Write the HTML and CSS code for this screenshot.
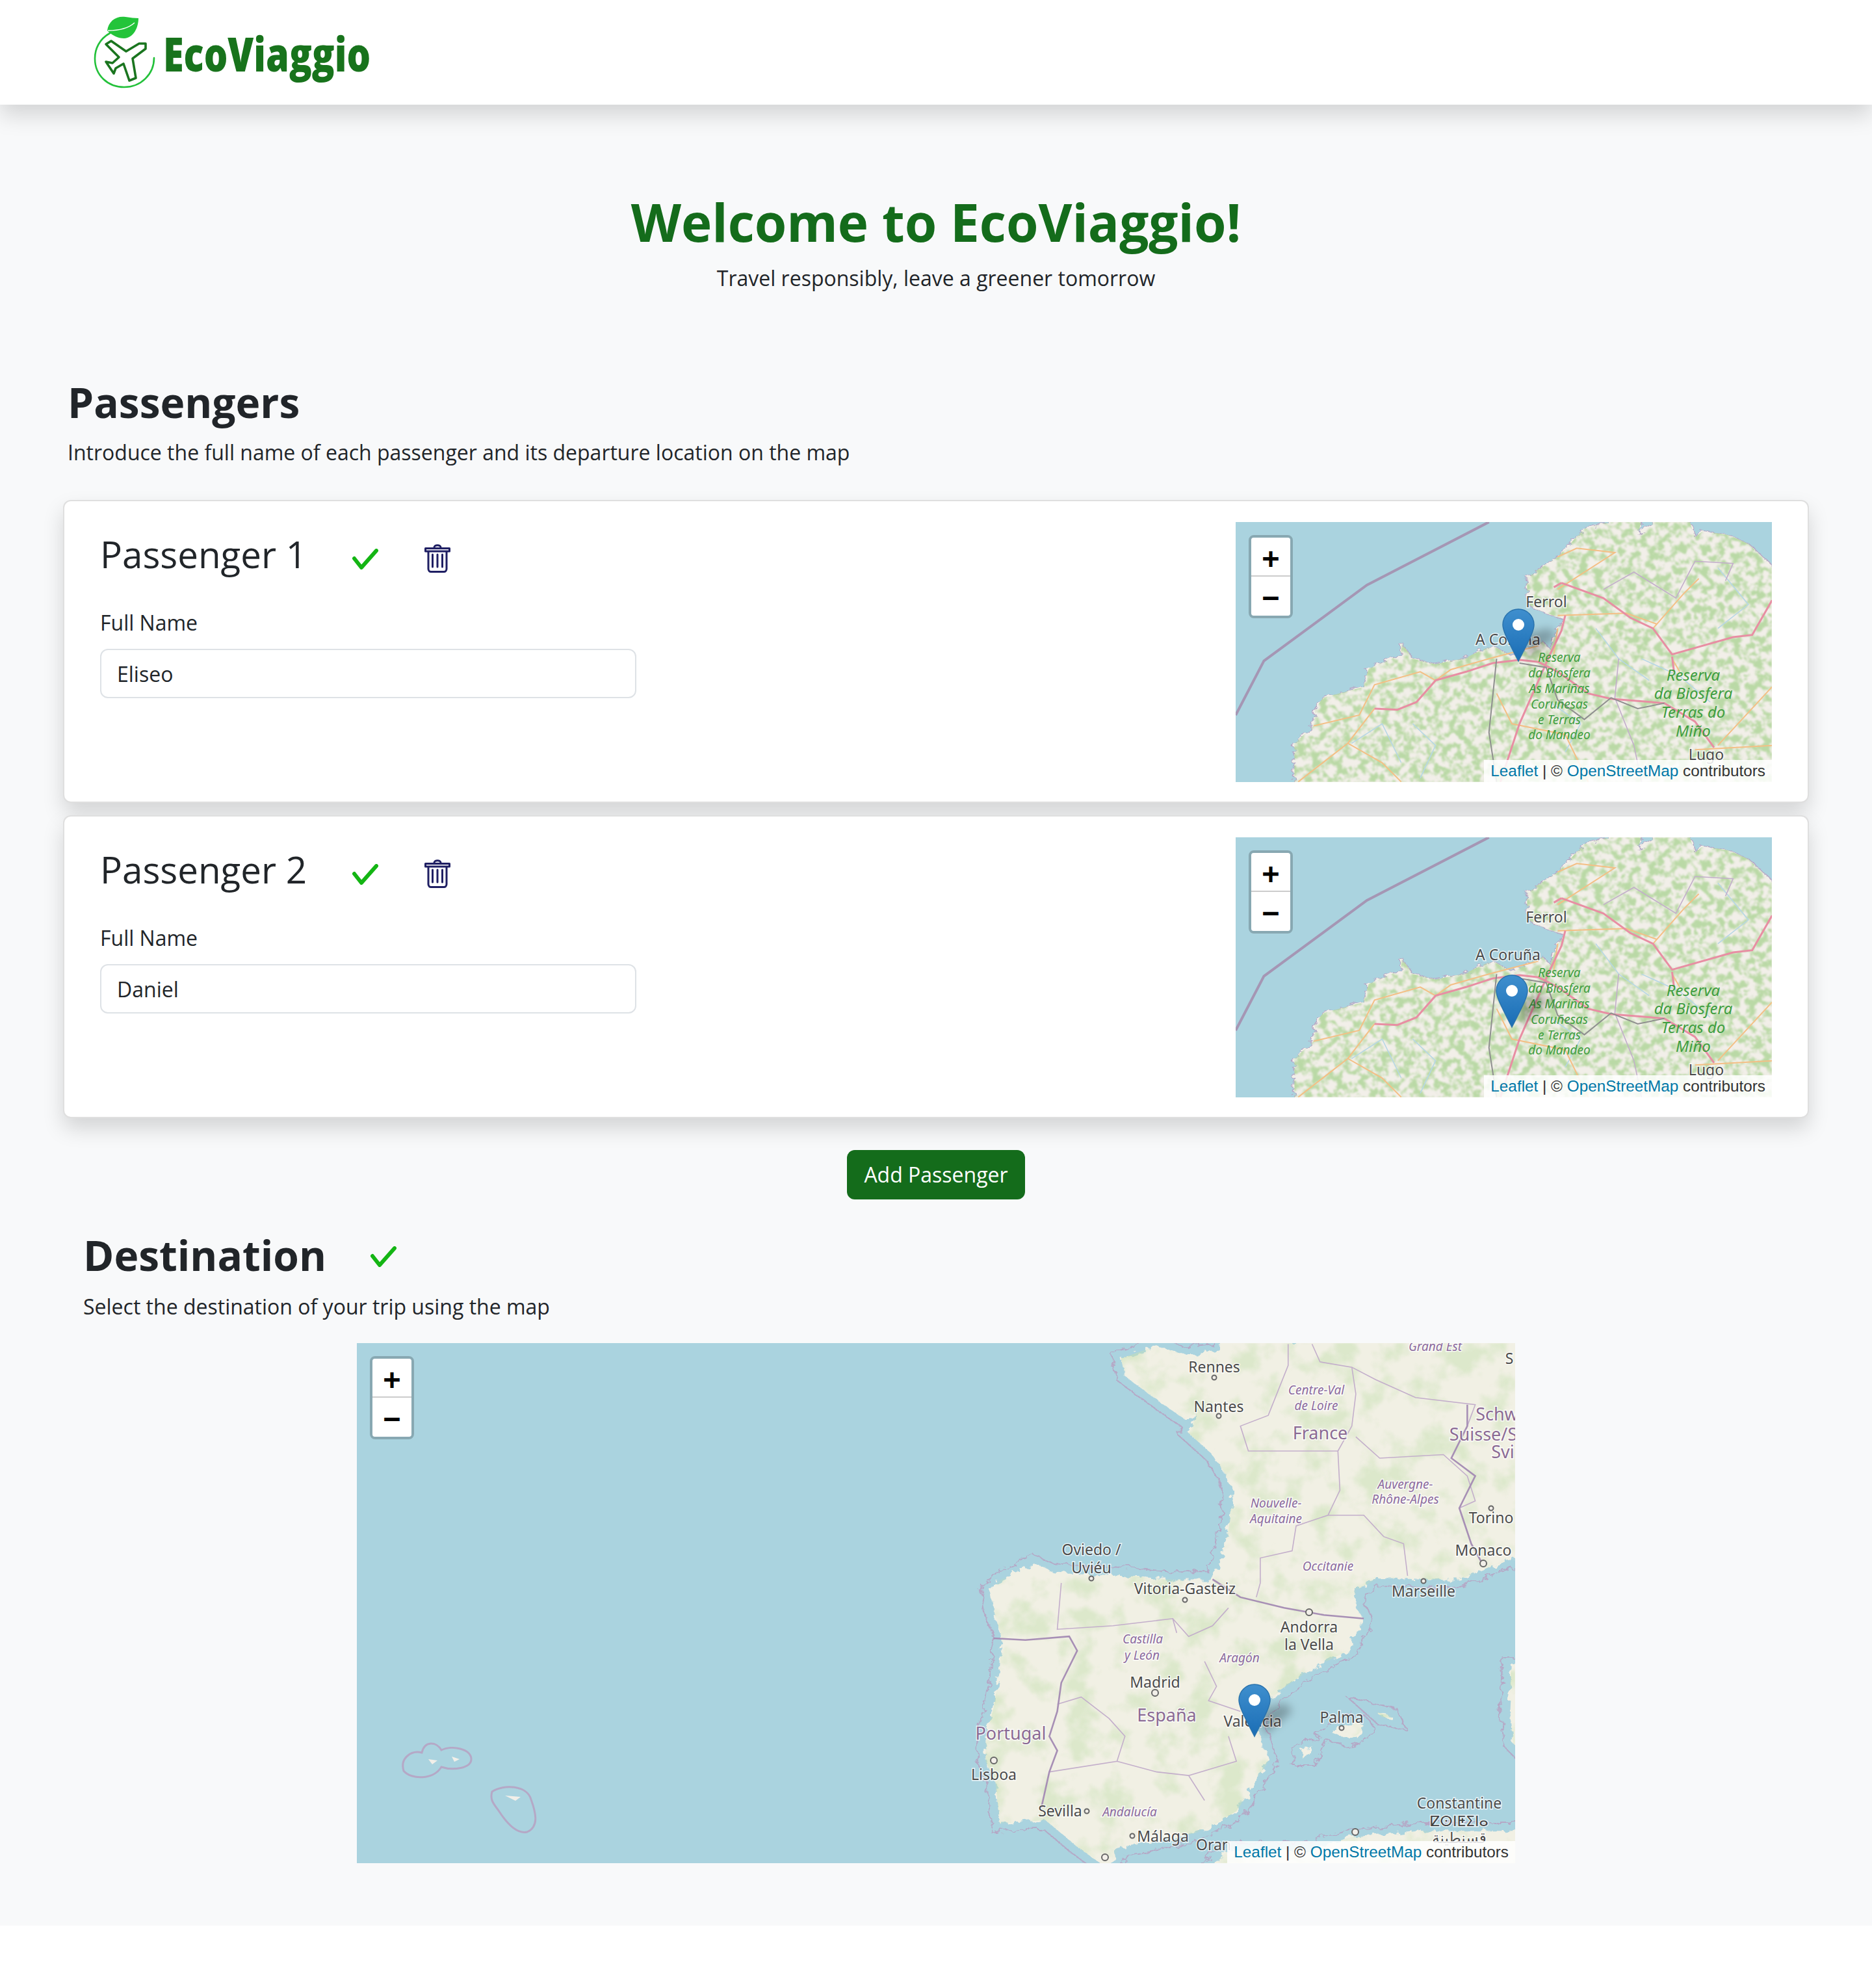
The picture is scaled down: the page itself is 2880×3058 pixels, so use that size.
FILE: index.html
```html
<!DOCTYPE html>
<html lang="en">
<head>
<meta charset="utf-8">
<title>EcoViaggio</title>
<link rel="stylesheet" href="styles.css">
</head>
<body>
<svg class="defs" width="0" height="0" aria-hidden="true">
  <defs>
    <filter id="mottle" x="0" y="0" width="100%" height="100%" color-interpolation-filters="sRGB">
      <feTurbulence type="fractalNoise" baseFrequency=".085" numOctaves="4" seed="7"/>
      <feColorMatrix values="0 0 0 0 .73  0 0 0 0 .85  0 0 0 0 .65  5 0 0 0 -2.1"/>
      <feGaussianBlur stdDeviation=".8"/>
    </filter>
    <filter id="mottle-soft" x="0" y="0" width="100%" height="100%" color-interpolation-filters="sRGB">
      <feTurbulence type="fractalNoise" baseFrequency=".022" numOctaves="5" seed="11"/>
      <feColorMatrix values="0 0 0 0 .78  0 0 0 0 .88  0 0 0 0 .70  4 0 0 0 -1.9"/>
      <feGaussianBlur stdDeviation="1.200"/>
    </filter>
    <filter id="rough" x="-5%" y="-5%" width="110%" height="110%">
      <feTurbulence type="fractalNoise" baseFrequency=".045" numOctaves="4" seed="3" result="n"/>
      <feDisplacementMap in="SourceGraphic" in2="n" scale="26"/>
    </filter>
    <filter id="soft-shadow" x="-50%" y="-50%" width="200%" height="200%">
      <feGaussianBlur stdDeviation="7"/>
    </filter>
    <linearGradient id="pin" x1="0" y1="0" x2="0" y2="1">
      <stop offset="0" stop-color="#3f8fce"/>
      <stop offset="1" stop-color="#1a6db5"/>
    </linearGradient>

    <path id="galicia-land" d="M190 1300L190 1090L240 1010L245 930L265 880L370 830L385 745L470 680L470 625L500 700L560 725L640 695L680 660L710 640L760 690L840 620L860 660L880 560L900 520L820 470L800 440L800 320L880 230L950 100L1030 60L1100 60L1090 130L1130 60L1225 60L1240 140L1260 110L1330 130L1380 170L1460 300L1460 1300Z"/>
    <clipPath id="galicia-clip"><use href="#galicia-land" transform="translate(-21.1,-23) scale(.5869,.3333)"/></clipPath>

    <symbol id="galicia-map" viewBox="0 0 825 400">
      <rect class="sea" width="825" height="400"/>
      <g transform="translate(-21.1,-23) scale(.5869,.3333)">
        <path class="m-bound" d="M700 69L380 360L110 710L36 960"/>
      </g>
      <use href="#galicia-land" class="land-halo" transform="translate(-21.1,-23) scale(.5869,.3333)"/>
      <use href="#galicia-land" class="land" transform="translate(-21.1,-23) scale(.5869,.3333)"/>
      <rect class="mottle" width="825" height="400" clip-path="url(#galicia-clip)"/>
      <g transform="translate(-21.1,-23) scale(.5869,.3333)">
        <path class="river" d="M1100 700L1200 780L1280 900M500 1000L560 1100L520 1250M980 560L1040 700L1120 800M1300 280L1380 450L1300 560M860 900L940 1000L900 1130M340 1090L420 1000L470 1180"/>
        <path class="border" d="M1000 380L1080 300L1190 420L1240 250L1340 260L1320 340M1040 700L1030 880L1080 1100L1100 1268"/>
        <path class="minor" d="M240 1010L360 960L400 820L520 760L560 800M400 930L330 1090L420 1180L470 1268M880 230L930 190L1030 210L880 380M880 500L1060 490L1140 540M1240 1120L1442 1100M720 860L760 1000L900 1050L960 1268M1180 700L1200 760M1442 830L1300 1100M830 640L700 700L600 750L560 800M880 560L870 680M1130 560L1210 400L1250 330M330 1090L200 1268"/>
        <path class="road" d="M400 930L460 935L510 900L560 800L640 760L710 720L780 705L830 715L880 760L960 860L1020 885L1160 905L1240 990L1290 1110M890 350L1000 420L1070 510L1130 560L1180 680L1340 600L1390 590L1442 430M870 370L890 350M900 500L890 570L860 680L830 800L780 1000L730 1268M1180 690L1185 760"/>
        <path class="rail" d="M720 700L700 1040L720 1268M780 720L850 740L880 890L950 980L1020 880L1090 930L1160 905"/>
      </g>
      <text class="ml" x="478" y="131">Ferrol</text>
      <text class="ml" x="419" y="189">A Coruña</text>
      <text class="ml" x="724" y="366">Lugo</text>
      <text class="ml-green" x="498" y="215">Reserva</text>
      <text class="ml-green" x="498" y="239">da Biosfera</text>
      <text class="ml-green" x="498" y="263">As Mariñas</text>
      <text class="ml-green" x="498" y="287">Coruñesas</text>
      <text class="ml-green" x="498" y="311">e Terras</text>
      <text class="ml-green" x="498" y="334">do Mandeo</text>
      <text class="ml-green big" x="704" y="244">Reserva</text>
      <text class="ml-green big" x="704" y="272">da Biosfera</text>
      <text class="ml-green big" x="704" y="301">Terras do</text>
      <text class="ml-green big" x="704" y="330">Miño</text>
    </symbol>

    <symbol id="pin-icon" viewBox="0 0 100 84">
      <path class="pin-shadow" d="M34 40L72 30L84 42L40 80Z"/>
      <path class="pin-body" d="M25 1C11.700 1 1 11.700 1 25C1 33 5 42 25 81C45 42 49 33 49 25C49 11.700 38.300 1 25 1Z"/>
      <circle class="pin-dot" cx="25" cy="25" r="9"/>
    </symbol>

    <path id="dest-land" d="M530 70L620 35L690 60L780 50L780 20L1540 20L1540 620L1440 665L1380 690L1280 690L1180 685L1120 720L1120 770L1140 800L1100 890L1010 940L930 1000L880 1060L870 1110L880 1130L900 1200L850 1290L820 1340L760 1380L720 1400L600 1430L530 1440L500 1500L470 1480L420 1440L340 1365L225 1375L215 1260L190 1200L190 1130L210 1050L225 950L230 850L210 780L200 720L230 690L310 645L360 670L560 680L640 690L760 690L780 640L800 550L810 440L790 390L760 340L700 280L720 225L690 240L650 210L600 170L540 120ZM740 1510L800 1450L1000 1450L1110 1412L1200 1405L1280 1395L1400 1395L1540 1395L1540 1510ZM1060 1120C1100 1090 1130 1080 1140 1105C1130 1125 1110 1140 1095 1135ZM1172 1062L1208 1072L1212 1082L1185 1075ZM985 1170L1012 1160L1000 1190L985 1190ZM1510 930L1540 930L1540 1180L1515 1150L1505 1050Z"/>
    <clipPath id="dest-clip"><use href="#dest-land" transform="translate(851,-15) scale(.6124,.5485)"/></clipPath>
  </defs>
</svg>

<header class="navbar">
  <div class="brand">
    <svg class="logo" viewBox="130 10 130 130">
      <path class="logo-ring" d="M168 51C152 60 145 75 145 90C145 116 165 134 190 134C216 134 236 114 236 89"/>
      <path class="logo-leaf" d="M164 47C166 32 178 24 192 26C200 27 206 28 212 28C212 42 205 58 190 59C180 59 172 54 167 50Z"/>
      <path class="logo-vein" d="M165 47C182 47 196 44 206 35"/>
      <path class="logo-plane" d="M170 63L193 79L213 67L223 67L223 75L203 90L208 120L198 124L189 98L177 105L174 113L162 95L172 97L182 88L162 68Z"/>
    </svg>
    <span class="brand-name">EcoViaggio</span>
  </div>
</header>

<main class="page">
  <section class="hero">
    <h1 class="hero-title">Welcome to EcoViaggio!</h1>
    <p class="hero-sub">Travel responsibly, leave a greener tomorrow</p>
  </section>

  <section class="passengers">
    <h2 class="section-title">Passengers</h2>
    <p class="section-sub">Introduce the full name of each passenger and its departure location on the map</p>
  </section>

  <div class="cards">
    <article class="card">
      <div class="card-form">
        <div class="card-head">
          <h3 class="card-title">Passenger 1</h3>
          <svg class="check" viewBox="0 0 40 32"><path d="M3 15L14 29L37 3"/></svg>
          <svg class="trash" viewBox="0 0 40 45"><path d="M1.500 7.500H38.500V12H1.500ZM15 6C15 1.500 25 1.500 25 6M6 12V39C6 42 8 43.500 10 43.500H30C32 43.500 34 42 34 39V12M12.500 17V36M20 17V36M27.500 17V36"/></svg>
        </div>
        <label class="field-label" for="p1">Full Name</label>
        <input class="field-input" id="p1" type="text" value="Eliseo">
      </div>
      <div class="map map-card">
        <svg class="map-art"><use href="#galicia-map"/></svg>
        <div class="zoom"><span class="zoom-btn">+</span><span class="zoom-btn">−</span></div>
        <svg class="pin pin-a"><use href="#pin-icon"/></svg>
        <div class="attrib"><a>Leaflet</a> | © <a>OpenStreetMap</a> contributors</div>
      </div>
    </article>

    <article class="card">
      <div class="card-form">
        <div class="card-head">
          <h3 class="card-title">Passenger 2</h3>
          <svg class="check" viewBox="0 0 40 32"><path d="M3 15L14 29L37 3"/></svg>
          <svg class="trash" viewBox="0 0 40 45"><path d="M1.500 7.500H38.500V12H1.500ZM15 6C15 1.500 25 1.500 25 6M6 12V39C6 42 8 43.500 10 43.500H30C32 43.500 34 42 34 39V12M12.500 17V36M20 17V36M27.500 17V36"/></svg>
        </div>
        <label class="field-label" for="p2">Full Name</label>
        <input class="field-input" id="p2" type="text" value="Daniel">
      </div>
      <div class="map map-card">
        <svg class="map-art"><use href="#galicia-map"/></svg>
        <div class="zoom"><span class="zoom-btn">+</span><span class="zoom-btn">−</span></div>
        <svg class="pin pin-b"><use href="#pin-icon"/></svg>
        <div class="attrib"><a>Leaflet</a> | © <a>OpenStreetMap</a> contributors</div>
      </div>
    </article>
  </div>

  <div class="actions"><button class="btn" type="button">Add Passenger</button></div>

  <section class="destination">
    <div class="dest-head">
      <h2 class="section-title">Destination</h2>
      <svg class="check" viewBox="0 0 40 32"><path d="M3 15L14 29L37 3"/></svg>
    </div>
    <p class="section-sub">Select the destination of your trip using the map</p>
  </section>

  <div class="map map-dest">
    <svg class="map-art" viewBox="0 0 1782 800">
      <rect class="sea" width="1782" height="800"/>
      <use href="#dest-land" class="land-halo wide" transform="translate(851,-15) scale(.6124,.5485)"/>
      <use href="#dest-land" class="land-gap" transform="translate(851,-15) scale(.6124,.5485)"/>
      <use href="#dest-land" class="land pale" transform="translate(851,-15) scale(.6124,.5485)"/>
      <rect class="mottle-soft" width="1782" height="800" clip-path="url(#dest-clip)"/>
      <g class="isles">
        <path class="isle-halo" d="M72 658C66 638 84 626 100 630C104 612 122 612 130 626C146 618 176 624 176 640C176 654 148 658 130 652C118 672 84 672 72 658Z"/>
        <path class="isle-halo" d="M208 690C226 678 262 680 268 702C276 724 280 744 262 752C244 756 228 734 220 722C212 710 204 704 208 690Z"/>
        <path class="isle" d="M228 696L252 698L244 704Z"/>
        <path class="isle" d="M110 640L124 642L116 648ZM146 636L158 640L150 644Z"/>
      </g>
      <g transform="translate(851,-15) scale(.6124,.5485)">
        <path class="border" d="M950 30L950 90L900 230L830 260L850 330L980 330L1075 330L1080 440L1050 510L970 540L960 610L880 630L880 700L870 740M1010 30L1030 80L1110 95L1120 170L1110 260L1075 330M1110 95L1170 130L1270 180L1420 200L1400 260M1120 290L1180 350L1340 340L1400 400L1420 470L1380 490L1410 590L1440 650M1050 510L1140 510L1190 570L1240 590L1250 680M380 700L370 830L510 820L660 800L700 850L760 820L800 770M660 800L670 840M740 920L770 990L750 1030L830 1060M500 1080L540 1130L520 1200L350 1230M500 1080L430 1020L370 1040M800 1130L820 1200L700 1240L740 1310M520 1200L620 1230L700 1240"/>
        <path class="border strong" d="M760 690L830 740L940 770L1040 790L1140 800M210 855L290 860L400 850L420 890L380 980L370 1060L350 1130L370 1170L350 1230L330 1330M1400 200L1400 260L1360 350L1420 400L1380 490L1410 590L1440 650"/>
      </g>
      <text class="ml" x="1319" y="45">Rennes</text>
      <text class="ml" x="1326" y="106">Nantes</text>
      <text class="ml-region" x="1476" y="79">Centre-Val</text>
      <text class="ml-region" x="1476" y="103">de Loire</text>
      <text class="ml-country" x="1482" y="148">France</text>
      <text class="ml-region" x="1659" y="12">Grand Est</text>
      <text class="ml" x="1773" y="32">S</text>
      <text class="ml-country" x="1754" y="119">Schw</text>
      <text class="ml-country" x="1733" y="150">Suisse/S</text>
      <text class="ml-country" x="1763" y="177">Svi</text>
      <text class="ml-region" x="1613" y="224">Auvergne-</text>
      <text class="ml-region" x="1613" y="247">Rhône-Alpes</text>
      <text class="ml-region" x="1414" y="253">Nouvelle-</text>
      <text class="ml-region" x="1414" y="277">Aquitaine</text>
      <text class="ml" x="1745" y="277">Torino</text>
      <text class="ml" x="1733" y="327">Monaco</text>
      <text class="ml-region" x="1494" y="350">Occitanie</text>
      <text class="ml" x="1130" y="326">Oviedo /</text>
      <text class="ml" x="1130" y="354">Uviéu</text>
      <text class="ml" x="1274" y="386">Vitoria-Gasteiz</text>
      <text class="ml" x="1641" y="390">Marseille</text>
      <text class="ml" x="1465" y="445">Andorra</text>
      <text class="ml" x="1465" y="472">la Vella</text>
      <text class="ml-region" x="1209" y="462">Castilla</text>
      <text class="ml-region" x="1208" y="487">y León</text>
      <text class="ml-region" x="1358" y="491">Aragón</text>
      <text class="ml" x="1228" y="530">Madrid</text>
      <text class="ml-country" x="1246" y="582">España</text>
      <text class="ml" x="1378" y="590">Valencia</text>
      <text class="ml" x="1515" y="584">Palma</text>
      <text class="ml-country" x="1006" y="610">Portugal</text>
      <text class="ml" x="980" y="672">Lisboa</text>
      <text class="ml" x="1082" y="728">Sevilla</text>
      <text class="ml-region" x="1189" y="728">Andalucía</text>
      <text class="ml" x="1240" y="767">Málaga</text>
      <text class="ml" x="1318" y="780">Oran</text>
      <text class="ml" x="1696" y="716">Constantine</text>
      <text class="ml-tif" x="1696" y="743">ⵇⵙⵏⵟⵉⵏⴰ</text>
      <text class="ml" x="1696" y="769">قسنطينة</text>
      <g class="dots">
        <circle cx="1319" cy="53" r="3.500"/><circle cx="1326" cy="112" r="3.500"/>
        <circle cx="1130" cy="362" r="3.500"/><circle cx="1274" cy="395" r="3.500"/>
        <circle cx="1465" cy="414" r="5"/><circle cx="1228" cy="538" r="5"/>
        <circle cx="980" cy="642" r="5"/><circle cx="1123" cy="720" r="3.500"/>
        <circle cx="1193" cy="758" r="3.500"/><circle cx="1151" cy="791" r="5"/>
        <circle cx="1515" cy="592" r="3.500"/><circle cx="1641" cy="366" r="3.500"/>
        <circle cx="1733" cy="339" r="5"/><circle cx="1745" cy="254" r="3.500"/>
        <circle cx="1536" cy="752" r="5"/>
      </g>
    </svg>
    <div class="zoom"><span class="zoom-btn">+</span><span class="zoom-btn">−</span></div>
    <svg class="pin pin-c"><use href="#pin-icon"/></svg>
    <div class="attrib"><a>Leaflet</a> | © <a>OpenStreetMap</a> contributors</div>
  </div>
</main>
</body>
</html>
```

FILE: styles.css
```css
* { box-sizing: border-box; }
html, body { margin: 0; padding: 0; }
body {
  background: #fff;
  color: #212529;
  font-family: "Open Sans", "Noto Sans", sans-serif;
  font-size: 32px;
  line-height: 1.5;
}
.defs { position: absolute; }

/* navbar */
.navbar {
  position: relative;
  z-index: 2;
  height: 161px;
  background: #fff;
  box-shadow: 0 16px 32px rgba(0, 0, 0, .15);
}
.brand { display: flex; align-items: flex-start; padding: 10px 0 0 131px; }
.logo { width: 130px; height: 130px; flex: none; }
.logo-ring { fill: none; stroke: #23c13a; stroke-width: 2.6; stroke-linecap: round; }
.logo-leaf { fill: #23c43a; }
.logo-vein { fill: none; stroke: #fff; stroke-width: 1.3; }
.logo-plane { fill: none; stroke: #1a751f; stroke-width: 3.6; stroke-linejoin: round; }
.brand-name {
  margin: 23px 0 0 -10px;
  color: #18731c;
  font-size: 72px;
  font-weight: 800;
  line-height: 98px;
  display: inline-block;
  transform: scaleX(.8);
  transform-origin: left center;
}

/* page */
.page { background: #f8f9fa; padding: 132px 0 96px; }
.hero { text-align: center; }
.hero-title { margin: 0 0 15px; color: #146c1b; font-size: 80px; font-weight: 700; line-height: 96px; }
.hero-sub { margin: 0; }
.passengers { margin: 128px 0 0; padding-left: 104px; }
.section-title { margin: 0; font-size: 64px; font-weight: 700; line-height: 77px; }
.section-sub { margin: 15px 0 0; line-height: 48px; }

/* cards */
.cards { display: flex; flex-direction: column; gap: 19px; margin: 49px 97px 0 97px; }
.card {
  display: flex;
  justify-content: space-between;
  height: 466px;
  padding: 32px 55px 0 55px;
  background: #fff;
  border: 2px solid rgba(0, 0, 0, .125);
  border-radius: 12px;
  box-shadow: 0 16px 32px rgba(0, 0, 0, .15);
}
.card-form { width: 825px; padding-top: 7px; }
.card-head { display: flex; align-items: center; height: 84px; }
.card-title { margin: 0; width: 388px; flex: none; font-size: 56.500px; font-weight: 400; line-height: 67px; }
.check { width: 40px; height: 32px; flex: none; margin-top: 15px; }
.check path { fill: none; stroke: #14b514; stroke-width: 6; stroke-linecap: round; stroke-linejoin: round; }
.trash { width: 40px; height: 45px; flex: none; margin: 13px 0 0 71px; }
.trash path { fill: none; stroke: #1f1f63; stroke-width: 3; stroke-linecap: round; stroke-linejoin: round; }
.field-label { display: block; margin-top: 40px; line-height: 48px; }
.field-input {
  display: block;
  width: 100%;
  height: 76px;
  margin-top: 16px;
  padding: 0 24px;
  color: #212529;
  background: #fff;
  border: 2px solid #dee2e6;
  border-radius: 12px;
  font: inherit;
}

/* maps */
.map { position: relative; overflow: hidden; flex: none; background: #aad3df; }
.map-card { width: 825px; height: 400px; }
.map-dest { width: 1782px; height: 800px; margin: 32px auto 0; }
.map-art { display: block; width: 100%; height: 100%; }
.zoom {
  position: absolute;
  top: 20px;
  left: 20px;
  display: flex;
  flex-direction: column;
  width: 68px;
  border: 4px solid rgba(0, 0, 0, .2);
  border-radius: 8px;
  background-clip: padding-box;
}
.zoom-btn {
  height: 60px;
  background: #fff;
  color: #000;
  font-family: "DejaVu Sans Mono", "Liberation Mono", monospace;
  font-size: 44px;
  font-weight: 700;
  line-height: 64px;
  text-align: center;
}
.zoom-btn:first-child { border-bottom: 2px solid #ccc; border-radius: 4px 4px 0 0; }
.zoom-btn:last-child { border-radius: 0 0 4px 4px; }
.attrib {
  position: absolute;
  right: 0;
  bottom: 0;
  padding: 0 10px;
  background: rgba(255, 255, 255, .85);
  color: #333;
  font-family: "Liberation Sans", Arial, sans-serif;
  font-size: 24.300px;
  line-height: 34px;
  white-space: nowrap;
}
.attrib a { color: #0078a8; }
.pin { position: absolute; width: 100px; height: 84px; }
.pin-a { left: 410px; top: 133px; }
.pin-b { left: 400px; top: 211px; }
.pin-c { left: 1356px; top: 524px; }
.pin-shadow { fill: rgba(0, 0, 0, .26); filter: url(#soft-shadow); }
.pin-body { fill: url(#pin); stroke: #2a73ad; stroke-width: 1.5; }
.pin-dot { fill: #fff; }

/* map drawing */
.sea { fill: #aad3df; }
.land { fill: #f2efe9; filter: url(#rough); }
.land.pale { fill: #f1f0e4; }
.land-halo { fill: none; stroke: #b5a8c6; stroke-width: 6; filter: url(#rough); }
.land-halo.wide { stroke-width: 48; }
.land-gap { fill: #aad3df; stroke: #aad3df; stroke-width: 41; filter: url(#rough); }
.mottle { filter: url(#mottle); }
.mottle-soft { filter: url(#mottle-soft); opacity: .5; }
.m-bound { fill: none; stroke: #a596b4; stroke-width: 4; vector-effect: non-scaling-stroke; }
.river { fill: none; stroke: #b5d6e6; stroke-width: 1.5; vector-effect: non-scaling-stroke; }
.border { fill: none; stroke: #c3aecb; stroke-width: 1.6; vector-effect: non-scaling-stroke; }
.border.strong { stroke: #a78fb5; stroke-width: 2.6; }
.minor { fill: none; stroke: #f4bf85; stroke-width: 2; vector-effect: non-scaling-stroke; }
.road { fill: none; stroke: #e88ea3; stroke-width: 3; vector-effect: non-scaling-stroke; }
.rail { fill: none; stroke: #8f8f8f; stroke-width: 2; vector-effect: non-scaling-stroke; }
.isle-halo { fill: none; stroke: #b5a8c6; stroke-width: 3; }
.isle { fill: #f2efe9; }
.dots circle { fill: #f2efe9; stroke: #666; stroke-width: 2; }
.ml, .ml-region, .ml-country, .ml-green, .ml-tif {
  font-family: "Noto Sans", "DejaVu Sans", sans-serif;
  text-anchor: middle;
  paint-order: stroke;
  stroke: rgba(255, 255, 255, .75);
  stroke-width: 3px;
}
.ml { fill: #4b4b4b; font-size: 23px; }
.ml-region { fill: #8c6b9e; font-size: 19px; font-style: italic; }
.ml-country { fill: #8b6b94; font-size: 27px; }
.ml-green { fill: #3f9e3f; font-size: 19px; font-style: italic; stroke-width: 0; }
.ml-green.big { font-size: 24px; }
.ml-tif { fill: #444; font-family: "DejaVu Sans", sans-serif; font-size: 22px; }

/* add button */
.actions { display: flex; justify-content: center; margin-top: 49px; }
.btn {
  width: 274px;
  height: 76px;
  padding: 0;
  color: #fff;
  background: #146c1b;
  border: 0;
  border-radius: 12px;
  font: inherit;
}

/* destination */
.destination { margin-top: 47px; padding-left: 128px; }
.dest-head { display: flex; align-items: center; gap: 68px; }
.dest-head .section-title { flex: none; }
.dest-head .check { margin-top: 4px; }
.destination .section-sub { margin-top: 17px; }
```
